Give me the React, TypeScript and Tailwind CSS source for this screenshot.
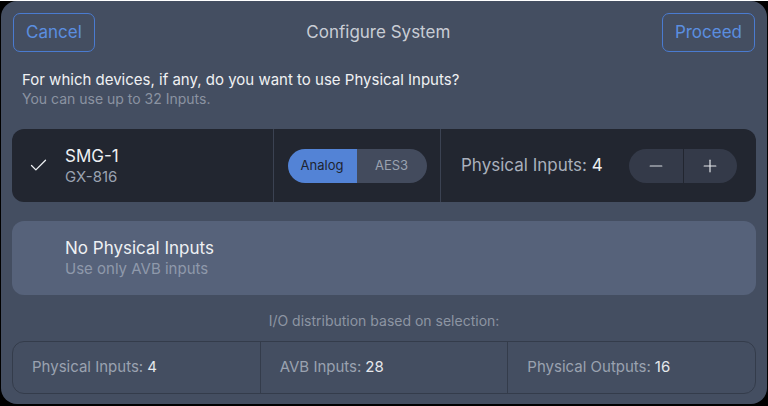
import { Check, Minus, Plus } from "lucide-react";

const font = { fontFamily: "Inter, 'Noto Sans', sans-serif" };

function Stat({ label, value, last }: { label: string; value: number; last?: boolean }) {
  return (
    <div className={`flex-1 flex items-center pl-[19px] text-[15px] text-[#9aa2b0] ${last ? "" : "border-r border-[#343c4b]"}`}>
      {label}: <span className="ml-1 text-[#e6e8ec]">{value}</span>
    </div>
  );
}

export default function App() {
  return (
    <div className="w-[768px] h-[406px] bg-black" style={font}>
      <div className="mx-[1px] mt-[1px] h-[403px] rounded-[16px] bg-[#444e61] flex flex-col">
        <div className="flex items-center justify-between px-[12px] pt-[12px]">
          <button className="h-[39px] px-[12px] rounded-[7px] border border-[#4a7bd0] text-[#5b8ee0] text-[17px]">
            Cancel
          </button>
          <div className="text-[17px] text-[#c9cdd5]">Configure System</div>
          <button className="h-[39px] px-[12px] rounded-[7px] border border-[#4a7bd0] text-[#5b8ee0] text-[17px]">
            Proceed
          </button>
        </div>

        <div className="px-[21px] mt-[18px]">
          <p className="text-[15px] leading-[20px] text-[#f0f1f3]">
            For which devices, if any, do you want to use Physical Inputs?
          </p>
          <p className="text-[14px] leading-[18px] text-[#8b93a1]">You can use up to 32 Inputs.</p>
        </div>

        <div className="mx-[11px] mt-[21px] h-[73px] rounded-[12px] bg-[#222630] flex">
          <div className="w-[262px] flex items-center border-r border-[#3b4252]">
            <Check className="w-[21px] h-[21px] ml-[16px] text-[#eef0f3]" strokeWidth={1.5} />
            <div className="ml-[16px]">
              <div className="text-[17px] leading-[21px] text-[#eef0f3]">SMG-1</div>
              <div className="text-[15px] leading-[19px] text-[#9aa2b0]">GX-816</div>
            </div>
          </div>
          <div className="w-[167px] flex items-center justify-center border-r border-[#3b4252]">
            <div className="flex h-[34px] rounded-full overflow-hidden text-[13px]">
              <div className="w-[69px] bg-[#5383d6] text-[#1e2430] flex items-center justify-center">Analog</div>
              <div className="w-[70px] bg-[#434b5d] text-[#9aa2b0] flex items-center justify-center">AES3</div>
            </div>
          </div>
          <div className="flex-1 flex items-center pl-[20px]">
            <div className="text-[17px] text-[#a9b0bc]">
              Physical Inputs: <span className="text-[#eef0f3]">4</span>
            </div>
            <div className="ml-auto mr-[19px] flex h-[34px] w-[108px] rounded-full overflow-hidden bg-[#343a49]">
              <div className="flex-1 flex items-center justify-center border-r border-[#222630]">
                <Minus className="w-[20px] h-[20px] text-[#d8dbe1]" strokeWidth={1.4} />
              </div>
              <div className="flex-1 flex items-center justify-center">
                <Plus className="w-[20px] h-[20px] text-[#e6e8ec]" strokeWidth={1.4} />
              </div>
            </div>
          </div>
        </div>

        <div className="mx-[11px] mt-[19px] h-[74px] rounded-[12px] bg-[#56627a] flex flex-col justify-center pl-[53px]">
          <div className="text-[17px] leading-[21px] text-[#eef0f3]">No Physical Inputs</div>
          <div className="text-[15px] leading-[19px] text-[#8f99ab]">Use only AVB inputs</div>
        </div>

        <div className="mt-[17px] text-center text-[14px] leading-[18px] text-[#8d95a3]">
          I/O distribution based on selection:
        </div>

        <div className="mx-[11px] mt-[11px] h-[53px] rounded-[12px] border border-[#343c4b] flex">
          <Stat label="Physical Inputs" value={4} />
          <Stat label="AVB Inputs" value={28} />
          <Stat label="Physical Outputs" value={16} last />
        </div>
      </div>
    </div>
  );
}
